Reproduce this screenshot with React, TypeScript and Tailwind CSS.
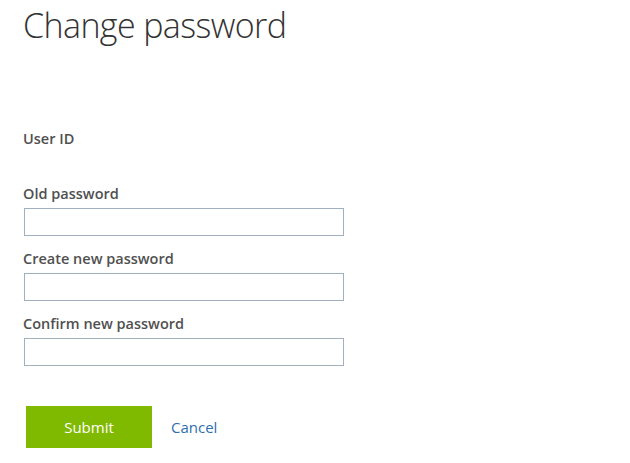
export default function App() {
  const fields = ["Old password", "Create new password", "Confirm new password"];

  return (
    <div className="min-h-[463px] w-[630px] bg-white pl-[23px] font-['Open_Sans',sans-serif] text-[#505050]">
      <h1 className="pt-[4px] text-[34px] leading-[42px] font-light tracking-[-0.6px] text-[#333]">
        Change password
      </h1>

      <div className="mt-[83px] h-5 text-[14.5px] leading-5 font-semibold">User ID</div>

      <div className="mt-[35px] flex flex-col gap-[13px]">
        {fields.map((label) => (
          <div key={label}>
            <label className="block h-5 text-[14.5px] leading-5 font-semibold">{label}</label>
            <input
              type="password"
              className="mt-1 ml-px block h-[28px] w-[320px] border border-[#a0b0c0] bg-white outline-none"
            />
          </div>
        ))}
      </div>

      <div className="mt-[40px] flex items-center">
        <button className="ml-[3px] h-[42px] w-[126px] bg-[#7fba00] text-[15px] text-white">
          Submit
        </button>
        <a href="#" className="ml-[19px] text-[15px] text-[#2f6fae]">
          Cancel
        </a>
      </div>
    </div>
  );
}
